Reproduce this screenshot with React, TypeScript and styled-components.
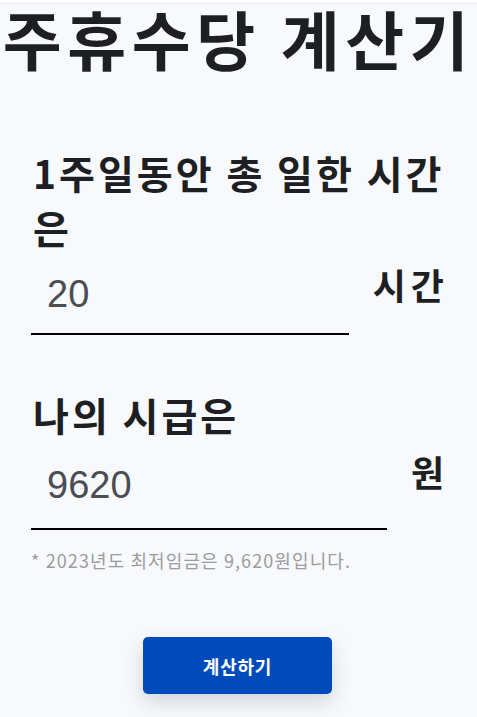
import styled, { createGlobalStyle } from "styled-components";

const GlobalStyle = createGlobalStyle`
  html, body {
    margin: 0;
    padding: 0;
    background: #f8f9fc;
  }
  body {
    font-family: "Noto Sans CJK KR", "Noto Sans", sans-serif;
    color: #1e1f22;
  }
  * {
    box-sizing: border-box;
  }
`;

const TopBar = styled.div`
  height: 4px;
  background: #ffffff;
  border-bottom: 1px solid #ebedf0;
`;

const Title = styled.h1`
  margin: 0;
  font-size: 64px;
  font-weight: 700;
  line-height: 1.05;
  text-align: center;
  white-space: nowrap;
  letter-spacing: 5.6px;
`;

const Form = styled.form`
  display: flex;
  flex-direction: column;
  padding: 0 33px 0 31px;
`;

const Question = styled.h2<{ $top: number }>`
  margin: ${(p) => p.$top}px -8px 0 2px;
  font-size: 39px;
  font-weight: 700;
  line-height: 55px;
  letter-spacing: 3px;
`;

const InputRow = styled.div`
  display: flex;
  align-items: flex-start;
  gap: 24px;
`;

const Field = styled.input<{ $h: number }>`
  flex: 1;
  min-width: 0;
  height: ${(p) => p.$h}px;
  padding: 0 16px;
  border: none;
  border-bottom: 2px solid #000;
  background: transparent;
  font-family: "Liberation Sans", Arial, sans-serif;
  font-size: 38px;
  color: #4a4d52;
  outline: none;
`;

const Unit = styled.span`
  margin-right: -5px;
  padding-top: 8px;
  font-size: 36px;
  font-weight: 700;
  line-height: 1.2;
  letter-spacing: 5px;
`;

const Note = styled.p`
  margin: 17px 0 0;
  font-size: 18px;
  color: #9c9c9c;
  letter-spacing: 1.1px;
`;

const ButtonWrap = styled.div`
  display: flex;
  justify-content: center;
  padding: 64px 0 40px;
`;

const CalcButton = styled.button`
  width: 189px;
  height: 57px;
  border: none;
  border-radius: 5px;
  background: #004bbb;
  color: #ffffff;
  font-family: "Noto Sans CJK KR", sans-serif;
  font-size: 18px;
  font-weight: 700;
  letter-spacing: 0.8px;
  box-shadow: 0 8px 20px rgba(40, 50, 70, 0.18);
  cursor: pointer;
`;

export default function App() {
  return (
    <>
      <GlobalStyle />
      <TopBar />
      <Title>주휴수당 계산기</Title>
      <Form onSubmit={(e) => e.preventDefault()}>
        <Question $top={74}>1주일동안 총 일한 시간은</Question>
        <InputRow>
          <Field type="text" $h={80} defaultValue="20" />
          <Unit>시간</Unit>
        </InputRow>
        <Question $top={52}>나의 시급은</Question>
        <InputRow>
          <Field type="text" $h={88} defaultValue="9620" />
          <Unit>원</Unit>
        </InputRow>
        <Note>* 2023년도 최저임금은 9,620원입니다.</Note>
        <ButtonWrap>
          <CalcButton type="submit">계산하기</CalcButton>
        </ButtonWrap>
      </Form>
    </>
  );
}
